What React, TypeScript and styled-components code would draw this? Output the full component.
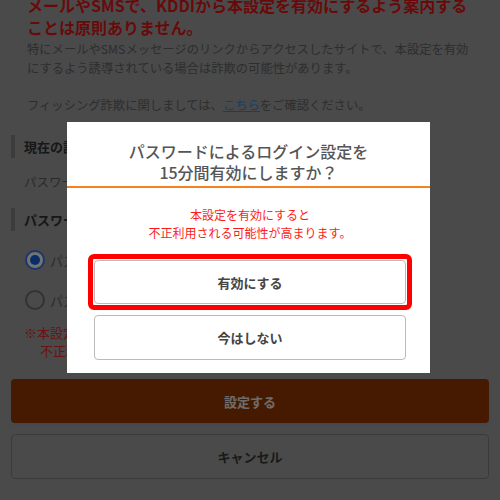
import React from "react";
import styled, { createGlobalStyle } from "styled-components";

const GlobalStyle = createGlobalStyle`
  html, body {
    margin: 0;
    padding: 0;
    overflow: hidden;
  }
  body {
    font-family: "Noto Sans CJK JP", "Noto Sans", sans-serif;
    background: #a4a4a4;
  }
`;

// ---- page behind the dialog ----

const Page = styled.div`
  height: 500px;
  padding: 0 11px;
  background: #a4a4a4;
  overflow: hidden;
`;

const Warning = styled.div`
  margin-top: -6px;
  padding: 0 8px 4px 16px;
`;

const WarningLead = styled.p`
  margin: 0;
  font-size: 16px;
  line-height: 22px;
  font-weight: 700;
  color: #e81818;
  white-space: nowrap;
`;

const WarningText = styled.p`
  margin: 2px 0 0;
  font-size: 12.3px;
  line-height: 18.5px;
  color: #666;
  white-space: nowrap;
`;

const Link = styled.a`
  color: #3a8ad0;
  text-decoration: underline;
`;

const Section = styled.section<{ gap: number }>`
  margin-top: ${({ gap }) => gap}px;
`;

const SectionTitle = styled.h2`
  margin: 0;
  height: 23px;
  border-left: 4px solid #858585;
  padding-left: 9px;
  font-size: 13px;
  line-height: 23px;
  font-weight: 700;
  color: #333;
`;

const Current = styled.p`
  margin: 15px 0 0 13px;
  font-size: 12.5px;
  line-height: 18px;
  color: #5e5e5e;
`;

const RadioList = styled.div`
  margin-top: 9px;
`;

const RadioRow = styled.label`
  display: flex;
  align-items: center;
  gap: 5px;
  height: 40px;
  padding-left: 14px;
  font-size: 13px;
  color: #5e5e5e;
`;

const RadioMark = styled.span<{ checked?: boolean }>`
  box-sizing: border-box;
  width: 20px;
  height: 20px;
  border-radius: 50%;
  border: 2px solid ${({ checked }) => (checked ? "#3d7bea" : "#707070")};
  background: ${({ checked }) => (checked ? "#fff" : "transparent")};
  display: flex;
  align-items: center;
  justify-content: center;
  &::after {
    content: "";
    width: 10px;
    height: 10px;
    border-radius: 50%;
    background: ${({ checked }) => (checked ? "#1565e8" : "transparent")};
  }
`;

const Note = styled.p`
  margin: 4px 0 0;
  padding-left: 29px;
  text-indent: -16px;
  font-size: 13px;
  line-height: 18px;
  color: #e82c2c;
`;

const PageButton = styled.button<{ primary?: boolean }>`
  display: block;
  box-sizing: border-box;
  width: 100%;
  border-radius: 4px;
  font-family: inherit;
  font-size: 13px;
  font-weight: 700;
  margin-top: ${({ primary }) => (primary ? "19px" : "11px")};
  height: ${({ primary }) => (primary ? "44px" : "45px")};
  border: ${({ primary }) => (primary ? "none" : "1px solid #828282")};
  background: ${({ primary }) => (primary ? "#9b3a00" : "transparent")};
  color: ${({ primary }) => (primary ? "#f4f0ec" : "#3a3a3a")};
  box-shadow: ${({ primary }) => (primary ? "0 2px 3px rgba(140, 160, 180, 0.7)" : "none")};
`;

// ---- dialog ----

const Overlay = styled.div`
  position: fixed;
  inset: 0;
  background: rgba(0, 0, 0, 0.55);
  display: flex;
  align-items: center;
  justify-content: center;
`;

const Dialog = styled.div`
  width: 363px;
  margin: 0 3px 5px 0;
  background: #fff;
`;

const DialogHeader = styled.div`
  padding: 19px 16px 3px;
  border-bottom: 2px solid #f5821f;
  text-align: center;
  font-size: 16px;
  line-height: 21px;
  font-weight: 500;
  color: #555;
`;

const DialogBody = styled.div`
  padding: 18px 0 13px 3px;
  display: flex;
  flex-direction: column;
  align-items: center;
`;

const Message = styled.p`
  margin: 0 0 12px;
  text-align: center;
  font-size: 12px;
  line-height: 18px;
  color: #ff1a1a;
`;

const Highlight = styled.div`
  padding: 1px;
  border: 5px solid #ff0000;
  border-radius: 6px;
`;

const DialogButton = styled.button<{ tall?: boolean }>`
  display: block;
  box-sizing: border-box;
  width: 312px;
  height: ${({ tall }) => (tall ? "45px" : "44px")};
  border: 1px solid #bbb;
  border-radius: 4px;
  background: #fff;
  font-family: inherit;
  font-size: 13px;
  font-weight: 700;
  color: #444;
`;

const Spacer = styled.div`
  height: 5px;
`;

export default function App() {
  return (
    <>
      <GlobalStyle />
      <Page>
        <Warning>
          <WarningLead>
            メールやSMSで、KDDIから本設定を有効にするよう案内する
            <br />
            ことは原則ありません。
          </WarningLead>
          <WarningText>
            特にメールやSMSメッセージのリンクからアクセスしたサイトで、本設定を有効
            <br />
            にするよう誘導されている場合は詐欺の可能性があります。
            <br />
            <br />
            フィッシング詐欺に関しましては、<Link>こちら</Link>をご確認ください。
          </WarningText>
        </Warning>

        <Section gap={17}>
          <SectionTitle>現在の設定</SectionTitle>
          <Current>パスワードによるログイン：無効</Current>
        </Section>

        <Section gap={17}>
          <SectionTitle>パスワードによるログイン設定</SectionTitle>
          <RadioList>
            <RadioRow>
              <RadioMark checked />
              パスワードによるログインを有効にする
            </RadioRow>
            <RadioRow>
              <RadioMark />
              パスワードによるログインを無効にする
            </RadioRow>
          </RadioList>
          <Note>
            ※本設定を有効にすると、不正利用される可能性が
            <br />
            不正利用を防ぐため15分後に自動で無効になります。
          </Note>
        </Section>

        <PageButton primary>設定する</PageButton>
        <PageButton>キャンセル</PageButton>
      </Page>

      <Overlay>
        <Dialog>
          <DialogHeader>
            パスワードによるログイン設定を
            <br />
            15分間有効にしますか？
          </DialogHeader>
          <DialogBody>
            <Message>
              本設定を有効にすると
              <br />
              不正利用される可能性が高まります。
            </Message>
            <Highlight>
              <DialogButton>有効にする</DialogButton>
            </Highlight>
            <Spacer />
            <DialogButton tall>今はしない</DialogButton>
          </DialogBody>
        </Dialog>
      </Overlay>
    </>
  );
}
